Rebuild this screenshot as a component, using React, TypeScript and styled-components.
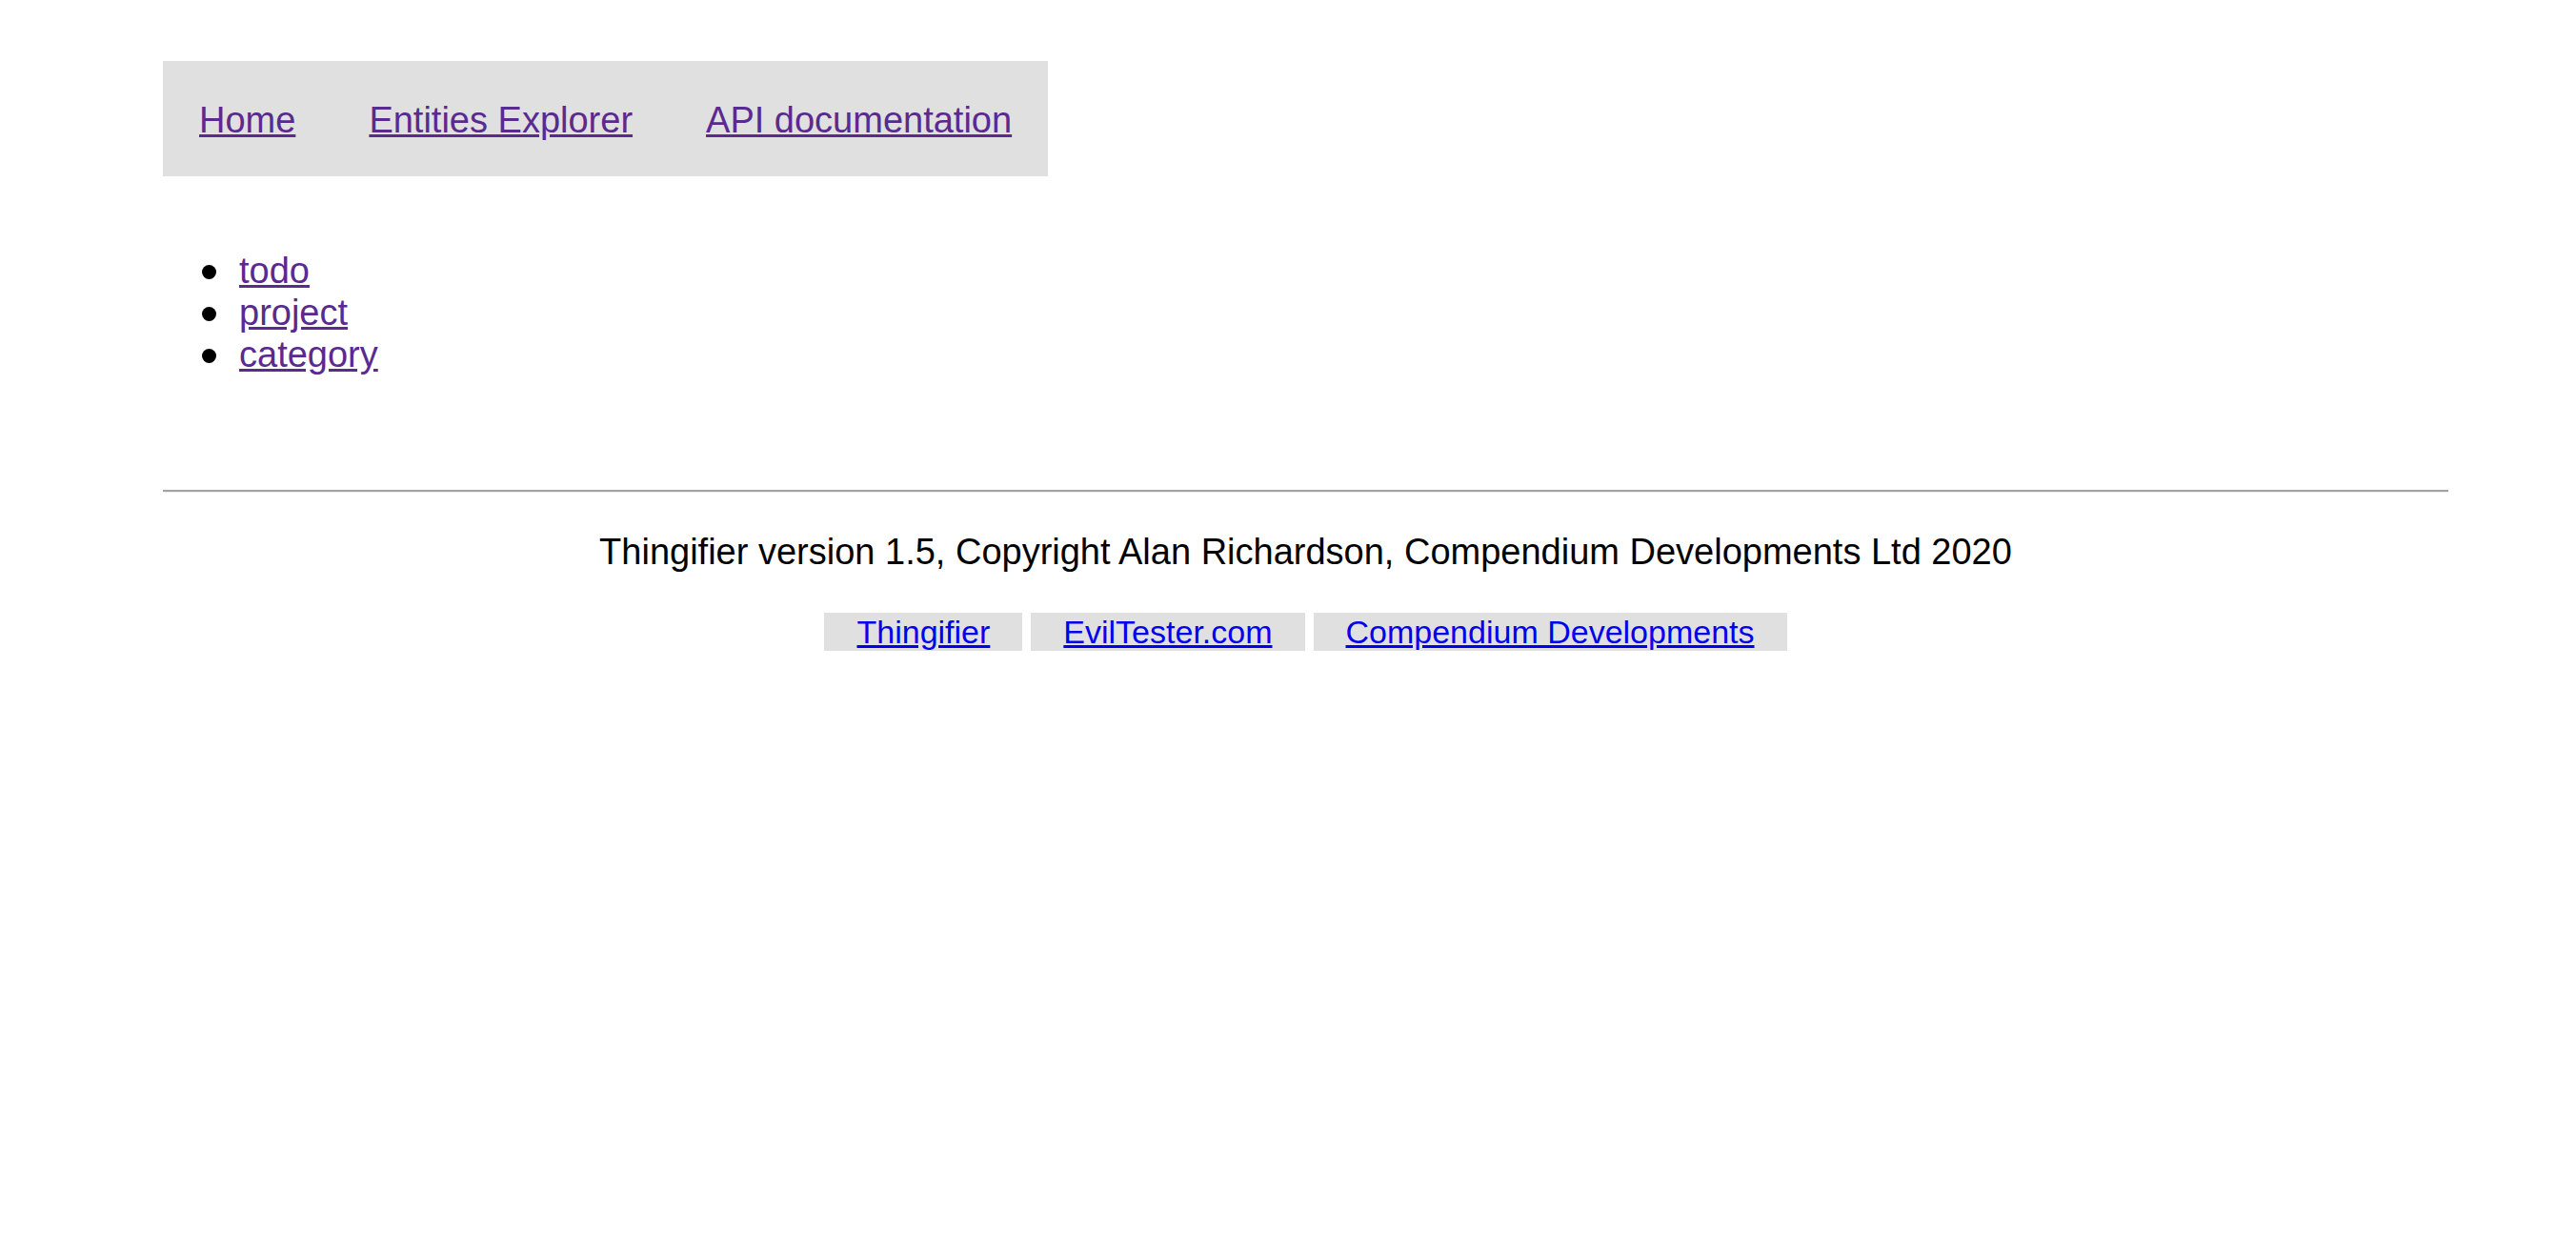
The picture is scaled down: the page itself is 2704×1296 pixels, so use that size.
import React from "react";
import styled, { createGlobalStyle } from "styled-components";

const GlobalStyle = createGlobalStyle`
  html, body {
    margin: 0;
    padding: 0;
    background: #ffffff;
  }
  body {
    font-family: "Liberation Sans", Arial, Helvetica, sans-serif;
    color: #000000;
  }
`;

const Page = styled.div`
  padding: 64px 134px 0 171px;
`;

const Nav = styled.nav`
  display: flex;
  width: fit-content;
  gap: 77px;
  padding: 40px 38px 36px;
  background: #e0e0e0;
  font-size: 38px;
  line-height: 45px;
`;

const NavLink = styled.a`
  color: #5a2a8f;
  text-decoration: underline;
`;

const EntityList = styled.ul`
  margin: 77px 0 0;
  padding-left: 80px;
  list-style: none;
  font-size: 38px;
  line-height: 44px;
`;

const EntityItem = styled.li`
  position: relative;

  &::before {
    content: "";
    position: absolute;
    left: -39px;
    top: 16px;
    width: 15px;
    height: 15px;
    border-radius: 50%;
    background: #000000;
  }
`;

const EntityLink = styled.a`
  color: #5a2a8f;
  text-decoration: underline;
`;

const Rule = styled.hr`
  margin: 120px 0 0;
  height: 0;
  border: none;
  border-top: 2px solid #a3a3a3;
  border-bottom: 1px solid #eeeeee;
`;

const Footer = styled.footer`
  text-align: center;
`;

const Copyright = styled.p`
  margin: 40px 0 0;
  font-size: 38px;
  line-height: 44px;
`;

const FooterLinks = styled.div`
  display: flex;
  justify-content: center;
  gap: 9px;
  margin-top: 42px;
`;

const FooterLink = styled.a`
  display: block;
  padding: 0 34px;
  background: #e0e0e0;
  color: #0000ee;
  text-decoration: underline;
  font-size: 34px;
  line-height: 40px;
`;

const navItems = ["Home", "Entities Explorer", "API documentation"];
const entities = ["todo", "project", "category"];
const footerLinks = ["Thingifier", "EvilTester.com", "Compendium Developments"];

export default function App() {
  return (
    <>
      <GlobalStyle />
      <Page>
        <Nav>
          {navItems.map((item) => (
            <NavLink key={item} href="#">
              {item}
            </NavLink>
          ))}
        </Nav>
        <EntityList>
          {entities.map((e) => (
            <EntityItem key={e}>
              <EntityLink href="#">{e}</EntityLink>
            </EntityItem>
          ))}
        </EntityList>
        <Rule />
        <Footer>
          <Copyright>
            Thingifier version 1.5, Copyright Alan Richardson, Compendium Developments Ltd 2020
          </Copyright>
          <FooterLinks>
            {footerLinks.map((l) => (
              <FooterLink key={l} href="#">
                {l}
              </FooterLink>
            ))}
          </FooterLinks>
        </Footer>
      </Page>
    </>
  );
}
